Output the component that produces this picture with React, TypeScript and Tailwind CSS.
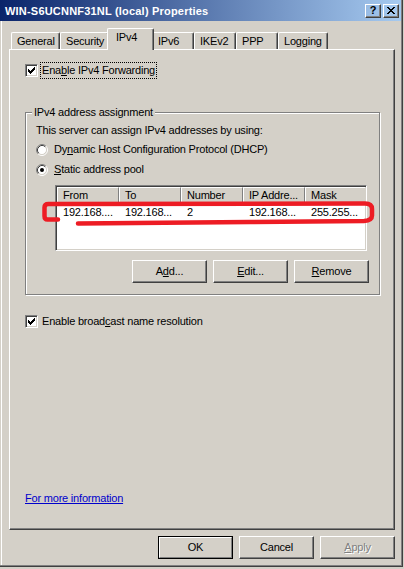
import React from "react";

const raised =
  "border border-t-white border-l-white border-r-[#404040] border-b-[#404040] shadow-[inset_-1px_-1px_0_#808080]";

function CheckMark() {
  return (
    <svg width="7" height="7" viewBox="0 0 7 7" shapeRendering="crispEdges">
      <path
        d="M6 0h1v1h-1zM5 1h2v1h-2zM0 2h1v1h-1zM4 2h3v1h-3zM0 3h2v1h-2zM3 3h3v1h-3zM0 4h5v1h-5zM1 5h3v1h-3zM2 6h1v1h-1z"
        fill="#000"
      />
    </svg>
  );
}

function CheckBox() {
  return (
    <div className="w-[13px] h-[13px] shrink-0 bg-white border border-t-[#808080] border-l-[#808080] border-r-white border-b-white shadow-[inset_1px_1px_0_#404040,inset_-1px_-1px_0_#d4d0c8] flex items-center justify-center">
      <CheckMark />
    </div>
  );
}

function Radio({ on }: { on?: boolean }) {
  return (
    <svg width="12" height="12" viewBox="0 0 12 12" className="shrink-0">
      <circle cx="6" cy="6" r="4.5" fill="#fff" />
      <path d="M2.11 9.89A5.5 5.5 0 0 1 9.89 2.11" stroke="#808080" fill="none" />
      <path d="M9.89 2.11A5.5 5.5 0 0 1 2.11 9.89" stroke="#fff" fill="none" />
      <path d="M2.82 9.18A4.5 4.5 0 0 1 9.18 2.82" stroke="#404040" fill="none" />
      <path d="M9.18 2.82A4.5 4.5 0 0 1 2.82 9.18" stroke="#d4d0c8" fill="none" />
      {on && <circle cx="6" cy="6" r="2" fill="#000" />}
    </svg>
  );
}

function CloseGlyph() {
  return (
    <svg width="8" height="7" viewBox="0 0 8 7" shapeRendering="crispEdges">
      <path
        d="M0 0h2v1h-2zM6 0h2v1h-2zM1 1h2v1h-2zM5 1h2v1h-2zM2 2h4v1h-4zM3 3h2v1h-2zM2 4h4v1h-4zM1 5h2v1h-2zM5 5h2v1h-2zM0 6h2v1h-2zM6 6h2v1h-2z"
        fill="#000"
      />
    </svg>
  );
}

function Tab({ label, w, selected }: { label: string; w: string; selected?: boolean }) {
  if (selected) {
    return (
      <div
        className={`relative z-10 -mx-[2px] -mb-[1px] h-[22px] ${w} shrink-0 bg-[#d4d0c8] border-t border-l border-r border-t-white border-l-white border-r-[#404040] shadow-[inset_-1px_0_0_#808080] rounded-t-[2px] pl-[8px] pt-[2px] leading-[13px]`}
      >
        {label}
      </div>
    );
  }
  return (
    <div
      className={`h-[17px] ${w} shrink-0 border-t border-l border-r border-t-white border-l-white border-r-[#404040] shadow-[inset_-1px_0_0_#808080] rounded-t-[2px] pl-[5px] pt-[2px] leading-[13px]`}
    >
      {label}
    </div>
  );
}

function Btn({ children, w = "w-[75px]" }: { children: React.ReactNode; w?: string }) {
  return (
    <div className={`${w} h-[23px] ${raised} flex items-center justify-center leading-[13px]`}>
      {children}
    </div>
  );
}

function HeaderCell({ children }: { children: React.ReactNode }) {
  return (
    <div className="w-[62px] shrink-0 h-[17px] bg-[#d4d0c8] border border-t-white border-l-white border-r-[#808080] border-b-[#808080] pl-[5px] flex items-center leading-[13px] whitespace-nowrap overflow-hidden">
      {children}
    </div>
  );
}

function Cell({ children }: { children: React.ReactNode }) {
  return (
    <div className="w-[62px] shrink-0 h-[17px] pl-[6px] flex items-center leading-[13px] whitespace-nowrap overflow-hidden">
      {children}
    </div>
  );
}

export default function App() {
  return (
    <div
      className="relative w-[404px] h-[569px] bg-[#d4d0c8] overflow-hidden text-black text-[11px] leading-[13px] tracking-[-0.2px] font-['Liberation_Sans',Arial,sans-serif] flex flex-col shadow-[inset_-1px_0_0_#d4d0c8,inset_0_-2px_0_#d4d0c8,inset_-2px_0_0_#404040,inset_0_-3px_0_#404040,inset_-3px_0_0_#808080,inset_0_-4px_0_#808080,inset_1px_0_0_#d4d0c8,inset_2px_0_0_#ffffff]"
    >
      {/* Title bar */}
      <div className="h-[21px] w-[401px] shrink-0 flex items-center pl-[5px] pr-[2px] bg-[linear-gradient(to_right,#0a246a,#a6caf0)]">
        <div className="flex-1 pt-[1px] text-white font-bold tracking-[0.2px] whitespace-nowrap">
          WIN-S6UCNNF31NL (local) Properties
        </div>
        <div className="flex gap-[2px]">
          <div className={`w-[16px] h-[14px] ${raised} flex items-center justify-center font-bold text-[11px] leading-[11px] tracking-normal`}>
            ?
          </div>
          <div className={`w-[16px] h-[14px] ${raised} flex items-center justify-center`}>
            <CloseGlyph />
          </div>
        </div>
      </div>

      {/* Tabs */}
      <div className="mt-[7px] ml-[11px] h-[21px] flex items-end shrink-0">
        <Tab label="General" w="w-[49px]" />
        <Tab label="Security" w="w-[49px]" />
        <Tab label="IPv4" w="w-[47px]" selected />
        <Tab label="IPv6" w="w-[42px]" />
        <Tab label="IKEv2" w="w-[42px]" />
        <Tab label="PPP" w="w-[42px]" />
        <Tab label="Logging" w="w-[50px]" />
      </div>

      {/* Panel */}
      <div className="ml-[9px] w-[386px] h-[481px] shrink-0 border border-t-white border-l-white border-r-[#404040] border-b-[#404040] shadow-[inset_-1px_-1px_0_#808080] flex flex-col pl-[15px] pt-[12px]">
        <div className="flex items-center h-[17px]">
          <CheckBox />
          <span className="ml-[2px] h-[17px] border border-dotted border-black px-[1px] flex items-center whitespace-nowrap">
            Ena<u>b</u>le IPv4 Forwarding
          </span>
        </div>

        {/* Group box */}
        <div className="mt-[33px] w-[355px] h-[183px] border border-[#808080] shadow-[inset_1px_1px_0_#ffffff,1px_1px_0_#ffffff] pl-[10px] flex flex-col">
          <div className="-mt-[7px] -ml-[4px] w-fit px-[2px] h-[13px] bg-[#d4d0c8] whitespace-nowrap">
            IPv4 address assignment
          </div>
          <div className="mt-[5px] h-[13px] whitespace-nowrap">
            This server can assign IPv4 addresses by using:
          </div>
          <div className="mt-[6px] h-[13px] flex items-center">
            <Radio />
            <span className="ml-[6px] whitespace-nowrap">
              Dy<u>n</u>amic Host Configuration Protocol (DHCP)
            </span>
          </div>
          <div className="mt-[7px] h-[13px] flex items-center">
            <Radio on />
            <span className="ml-[6px] whitespace-nowrap">
              <u>S</u>tatic address pool
            </span>
          </div>

          {/* List view */}
          <div className="mt-[9px] ml-[19px] w-[312px] h-[66px] shrink-0 bg-white border border-t-[#808080] border-l-[#808080] border-r-white border-b-white shadow-[inset_1px_1px_0_#404040,inset_-1px_-1px_0_#d4d0c8] p-[1px] overflow-hidden">
            <div className="w-full h-full overflow-hidden flex flex-col">
              <div className="flex shrink-0">
                <HeaderCell>From</HeaderCell>
                <HeaderCell>To</HeaderCell>
                <HeaderCell>Number</HeaderCell>
                <HeaderCell>IP Addre...</HeaderCell>
                <HeaderCell>Mask</HeaderCell>
              </div>
              <div className="flex shrink-0">
                <Cell>192.168....</Cell>
                <Cell>192.168...</Cell>
                <Cell>2</Cell>
                <Cell>192.168...</Cell>
                <Cell>255.255...</Cell>
              </div>
            </div>
          </div>

          <div className="mt-[9px] ml-[96px] flex gap-[6px]">
            <Btn>
              A<u>d</u>d...
            </Btn>
            <Btn>
              <u>E</u>dit...
            </Btn>
            <Btn>
              <u>R</u>emove
            </Btn>
          </div>
        </div>

        <div className="mt-[18px] flex items-center h-[17px]">
          <CheckBox />
          <span className="ml-[2px] h-[17px] border border-transparent px-[1px] flex items-center whitespace-nowrap">
            Enable broad<u>c</u>ast name resolution
          </span>
        </div>

        <div className="mt-[162px] h-[13px] w-fit text-[#0000cc] underline whitespace-nowrap">
          For more information
        </div>
      </div>

      {/* Dialog buttons */}
      <div className="mt-[6px] ml-[158px] flex gap-[6px] shrink-0">
        <div className="w-[75px] h-[23px] border border-black">
          <div className="w-full h-full border border-t-white border-l-white border-r-[#808080] border-b-[#808080] flex items-center justify-center">
            OK
          </div>
        </div>
        <Btn>Cancel</Btn>
        <Btn>
          <span className="text-[#808080] [text-shadow:1px_1px_0_#ffffff]">
            <u>A</u>pply
          </span>
        </Btn>
      </div>

      {/* Red annotation drawn over the list */}
      <svg
        className="absolute left-0 top-0 pointer-events-none"
        width="404"
        height="569"
        viewBox="0 0 404 569"
      >
        <path
          d="M58 219.5 L47.5 219.5 Q44.5 219.5 44.5 216 L44.5 207.5 Q44.5 204 48.5 204 L365 203.5 Q372 203.5 372 209 L372 215.5 Q372 220.5 364 221 L250 222 L78 223.5"
          stroke="#ed1c24"
          strokeWidth="4.5"
          fill="none"
          strokeLinecap="round"
          strokeLinejoin="round"
        />
      </svg>
    </div>
  );
}
